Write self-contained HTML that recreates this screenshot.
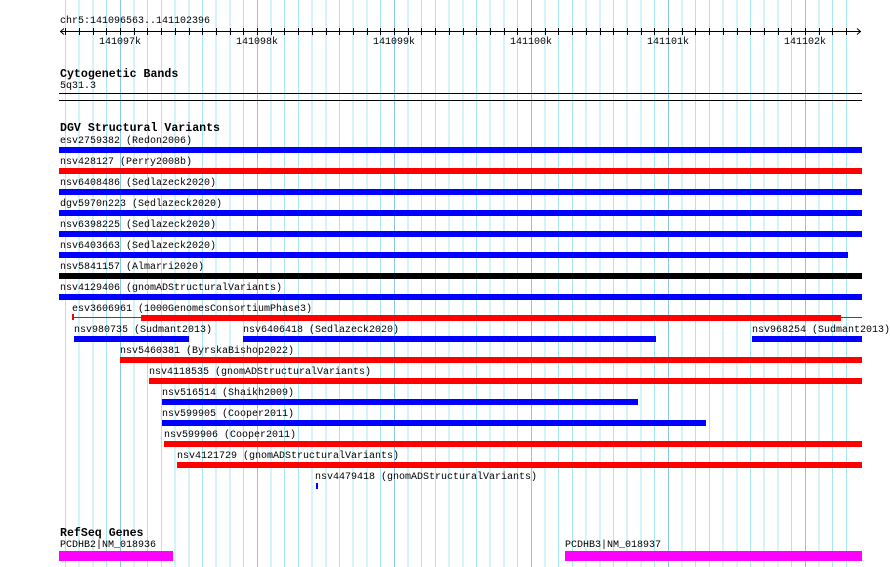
<!DOCTYPE html>
<html><head><style>
body{margin:0;width:890px;height:567px;background:#fff;position:relative;overflow:hidden;font-family:"Liberation Mono",monospace;}
.a{position:absolute}
.t{position:absolute;font-size:10px;line-height:11px;color:#000;white-space:nowrap;margin-top:1px}
.h{position:absolute;font-size:11.6px;line-height:12px;font-weight:bold;white-space:nowrap;margin-top:1px}
.b{position:absolute;height:6px}
.bl{background:#0000ff}.rd{background:#ff0000}
.mj{position:absolute;top:0;height:567px;width:1px;background:#88c8ec}
</style></head><body>
<div class="a" style="left:65px;top:0;width:783px;height:567px;background:repeating-linear-gradient(90deg,#a8e8f0 0 1px,transparent 1px 13.7px)"></div>
<div class="mj" style="left:120px"></div><div class="mj" style="left:257px"></div><div class="mj" style="left:394px"></div><div class="mj" style="left:531px"></div><div class="mj" style="left:668px"></div><div class="mj" style="left:805px"></div>
<div class="t" style="left:60px;top:15px">chr5:141096563..141102396</div>
<svg class="a" style="left:0;top:0" width="890" height="50">
<line x1="60" y1="31.5" x2="861" y2="31.5" stroke="#000"/>
<path d="M64 28.5 L60.5 31.5 L64 34.5 M857 28.5 L860.5 31.5 L857 34.5" stroke="#000" fill="none"/>
<g stroke="#000" id="tk"></g>
</svg>
<script>
var g=document.getElementById('tk'),s='';
for(var k=-4;k<=53;k++){var x=Math.round(120+k*13.7)+0.5;s+='<line x1="'+x+'" y1="28" x2="'+x+'" y2="35"/>';}
g.innerHTML=s;
</script>
<div class="t" style="left:99px;top:36px">141097k</div>
<div class="t" style="left:236px;top:36px">141098k</div>
<div class="t" style="left:373px;top:36px">141099k</div>
<div class="t" style="left:510px;top:36px">141100k</div>
<div class="t" style="left:647px;top:36px">141101k</div>
<div class="t" style="left:784px;top:36px">141102k</div>
<div class="h" style="left:60px;top:68px">Cytogenetic Bands</div>
<div class="t" style="left:60px;top:80px">5q31.3</div>
<div class="a" style="left:59px;top:93px;width:803px;height:1px;background:#000"></div>
<div class="a" style="left:59px;top:100px;width:803px;height:1px;background:#000"></div>
<div class="h" style="left:60px;top:122px">DGV Structural Variants</div>
<div class="t" style="left:60px;top:135px">esv2759382 (Redon2006)</div><div class="b bl" style="left:59px;top:147px;width:803px"></div>
<div class="t" style="left:60px;top:156px">nsv428127 (Perry2008b)</div><div class="b rd" style="left:59px;top:168px;width:803px"></div>
<div class="t" style="left:60px;top:177px">nsv6408486 (Sedlazeck2020)</div><div class="b bl" style="left:59px;top:189px;width:803px"></div>
<div class="t" style="left:60px;top:198px">dgv5970n223 (Sedlazeck2020)</div><div class="b bl" style="left:59px;top:210px;width:803px"></div>
<div class="t" style="left:60px;top:219px">nsv6398225 (Sedlazeck2020)</div><div class="b bl" style="left:59px;top:231px;width:803px"></div>
<div class="t" style="left:60px;top:240px">nsv6403663 (Sedlazeck2020)</div><div class="b bl" style="left:59px;top:252px;width:789px"></div>
<div class="t" style="left:60px;top:261px">nsv5841157 (Almarri2020)</div><div class="b" style="left:59px;top:273px;width:803px;background:#000"></div>
<div class="t" style="left:60px;top:282px">nsv4129406 (gnomADStructuralVariants)</div><div class="b bl" style="left:59px;top:294px;width:803px"></div>
<div class="t" style="left:72px;top:303px">esv3606961 (1000GenomesConsortiumPhase3)</div>
<div class="a rd" style="left:72px;top:314px;width:2px;height:6px"></div>
<div class="a rd" style="left:72px;top:317px;width:790px;height:1px"></div>
<div class="b rd" style="left:141px;top:315px;width:700px"></div>
<div class="t" style="left:74px;top:324px">nsv980735 (Sudmant2013)</div><div class="b bl" style="left:74px;top:336px;width:115px"></div>
<div class="t" style="left:243px;top:324px">nsv6406418 (Sedlazeck2020)</div><div class="b bl" style="left:243px;top:336px;width:413px"></div>
<div class="t" style="left:752px;top:324px">nsv968254 (Sudmant2013)</div><div class="b bl" style="left:752px;top:336px;width:110px"></div>
<div class="t" style="left:120px;top:345px">nsv5460381 (ByrskaBishop2022)</div><div class="b rd" style="left:120px;top:357px;width:742px"></div>
<div class="t" style="left:149px;top:366px">nsv4118535 (gnomADStructuralVariants)</div><div class="b rd" style="left:149px;top:378px;width:713px"></div>
<div class="t" style="left:162px;top:387px">nsv516514 (Shaikh2009)</div><div class="b bl" style="left:162px;top:399px;width:476px"></div>
<div class="t" style="left:162px;top:408px">nsv599905 (Cooper2011)</div><div class="b bl" style="left:162px;top:420px;width:544px"></div>
<div class="t" style="left:164px;top:429px">nsv599906 (Cooper2011)</div><div class="b rd" style="left:164px;top:441px;width:698px"></div>
<div class="t" style="left:177px;top:450px">nsv4121729 (gnomADStructuralVariants)</div><div class="b rd" style="left:177px;top:462px;width:685px"></div>
<div class="t" style="left:315px;top:471px">nsv4479418 (gnomADStructuralVariants)</div><div class="b bl" style="left:316px;top:483px;width:2px"></div>
<div class="h" style="left:60px;top:527px">RefSeq Genes</div>
<div class="t" style="left:60px;top:539px">PCDHB2|NM_018936</div><div class="a" style="left:59px;top:551px;width:114px;height:10px;background:#ff00ff"></div>
<div class="t" style="left:565px;top:539px">PCDHB3|NM_018937</div><div class="a" style="left:565px;top:551px;width:297px;height:10px;background:#ff00ff"></div>
</body></html>
